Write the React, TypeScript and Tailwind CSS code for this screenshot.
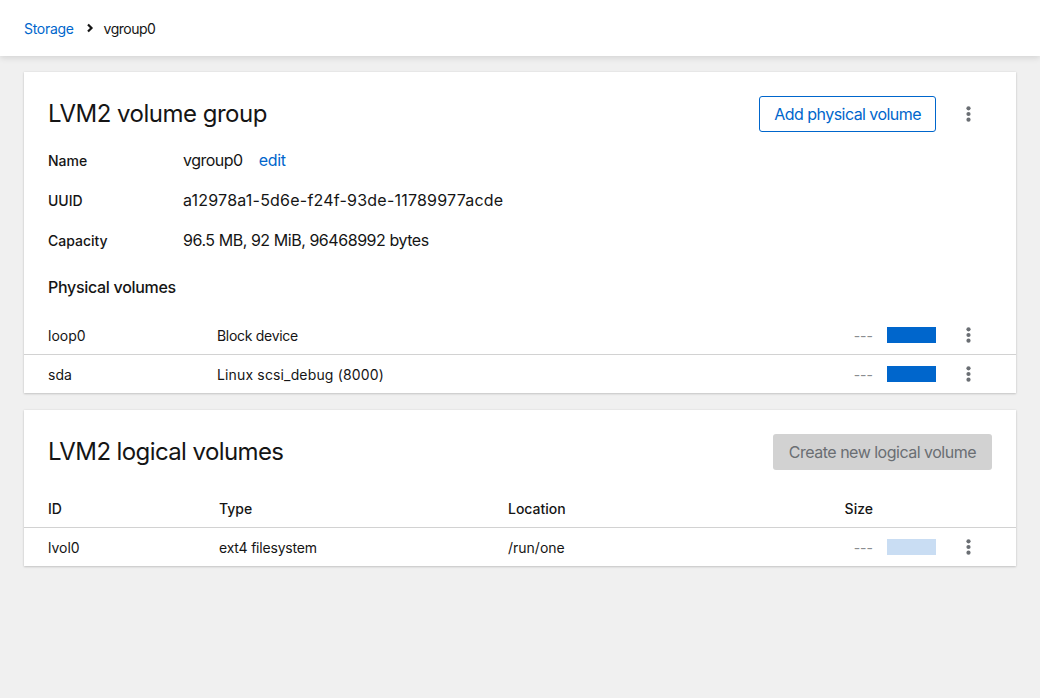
import React from "react";

const Kebab = () => (
  <div className="flex w-[64px] items-center justify-center">
    <svg width="5" height="16" viewBox="0 0 5 16" fill="#6a6e73">
      <circle cx="2.5" cy="2.3" r="2.1" />
      <circle cx="2.5" cy="8" r="2.1" />
      <circle cx="2.5" cy="13.7" r="2.1" />
    </svg>
  </div>
);

const SizeCell = ({ light }: { light?: boolean }) => (
  <div className="flex items-center">
    <span className="text-[14px] text-[#8a8d90]">---</span>
    <div className={`ml-[14px] h-4 w-[49px] ${light ? "bg-[#c9ddf3]" : "bg-[#0066cc]"}`} />
    <Kebab />
  </div>
);

export default function App() {
  return (
    <div
      className="min-h-[698px] w-full bg-[#f0f0f0] text-[#151515]"
      style={{ fontFamily: "Inter, 'Liberation Sans', sans-serif" }}
    >
      <div className="relative z-10 flex h-14 items-center bg-white px-6 shadow-[0_2px_6px_rgba(3,3,3,0.12)]">
        <span className="text-[14px] tracking-[-0.3px] text-[#0066cc]">Storage</span>
        <svg className="ml-[12px] mr-[10px]" width="8" height="10" viewBox="0 0 8 10">
          <path d="M2 1.5 L5.5 5 L2 8.5" fill="none" stroke="#151515" strokeWidth="2.2" />
        </svg>
        <span className="text-[14px] tracking-[-0.5px]">vgroup0</span>
      </div>

      <div className="flex flex-col gap-[17px] p-6 pt-4">
        {/* Card 1 */}
        <div className="bg-white shadow-[0_1px_2px_rgba(3,3,3,0.16),0_0_2px_rgba(3,3,3,0.08)]">
          <div className="mt-6 flex h-9 items-center justify-between pl-6 pr-4">
            <h1 className="text-[24px] leading-9 tracking-[-0.5px]">LVM2 volume group</h1>
            <div className="flex items-center">
              <button className="h-9 rounded-[3px] border border-[#0066cc] px-[14px] text-[16px] tracking-[-0.55px] text-[#0066cc]">
                Add physical volume
              </button>
              <Kebab />
            </div>
          </div>

          <div className="mt-4 flex flex-col gap-4 px-6">
            <div className="flex h-6 items-center">
              <div className="w-[135px] text-[14px] font-medium">Name</div>
              <div className="text-[16px] tracking-[-0.5px]">vgroup0</div>
              <div className="ml-4 text-[16px] tracking-[-0.3px] text-[#0066cc]">edit</div>
            </div>
            <div className="flex h-6 items-center">
              <div className="w-[135px] text-[14px] font-medium">UUID</div>
              <div className="text-[16px] tracking-[0.22px]">a12978a1-5d6e-f24f-93de-11789977acde</div>
            </div>
            <div className="flex h-6 items-center">
              <div className="w-[135px] text-[14px] font-medium">Capacity</div>
              <div className="text-[16px] tracking-[-0.45px]">96.5 MB, 92 MiB, 96468992 bytes</div>
            </div>
          </div>

          <div className="mt-[23px] flex h-6 items-center px-6 text-[16px] font-medium tracking-[-0.3px]">
            Physical volumes
          </div>

          <div className="mt-[17px]">
            <div className="flex h-[39px] items-center border-b border-[#d2d2d2] pl-6 pr-4 text-[14px]">
              <div className="w-[169px]">loop0</div>
              <div className="flex-1 tracking-[-0.3px]">Block device</div>
              <SizeCell />
            </div>
            <div className="flex h-[38px] items-center pl-6 pr-4 text-[14px]">
              <div className="w-[169px]">sda</div>
              <div className="flex-1 tracking-[0.15px]">Linux scsi_debug (8000)</div>
              <SizeCell />
            </div>
          </div>
        </div>

        {/* Card 2 */}
        <div className="bg-white shadow-[0_1px_2px_rgba(3,3,3,0.16),0_0_2px_rgba(3,3,3,0.08)]">
          <div className="mt-6 flex h-9 items-center justify-between px-6">
            <h2 className="text-[24px] leading-9 tracking-[-0.6px]">LVM2 logical volumes</h2>
            <button className="h-9 rounded-[3px] bg-[#d2d2d2] px-4 text-[16px] tracking-[-0.5px] text-[#6a6e73]">
              Create new logical volume
            </button>
          </div>

          <div className="mt-[19px] flex h-[39px] items-center border-b border-[#d2d2d2] pl-6 pr-4 text-[14px] font-medium">
            <div className="w-[171px]">ID</div>
            <div className="w-[289px]">Type</div>
            <div className="flex-1">Location</div>
            <div className="text-right">Size</div>
            <div className="w-[127px]" />
          </div>
          <div className="flex h-[38px] items-center pl-6 pr-4 text-[14px]">
            <div className="w-[171px]">lvol0</div>
            <div className="w-[289px] tracking-[-0.2px]">ext4 filesystem</div>
            <div className="flex-1">/run/one</div>
            <SizeCell light />
          </div>
        </div>
      </div>
    </div>
  );
}
